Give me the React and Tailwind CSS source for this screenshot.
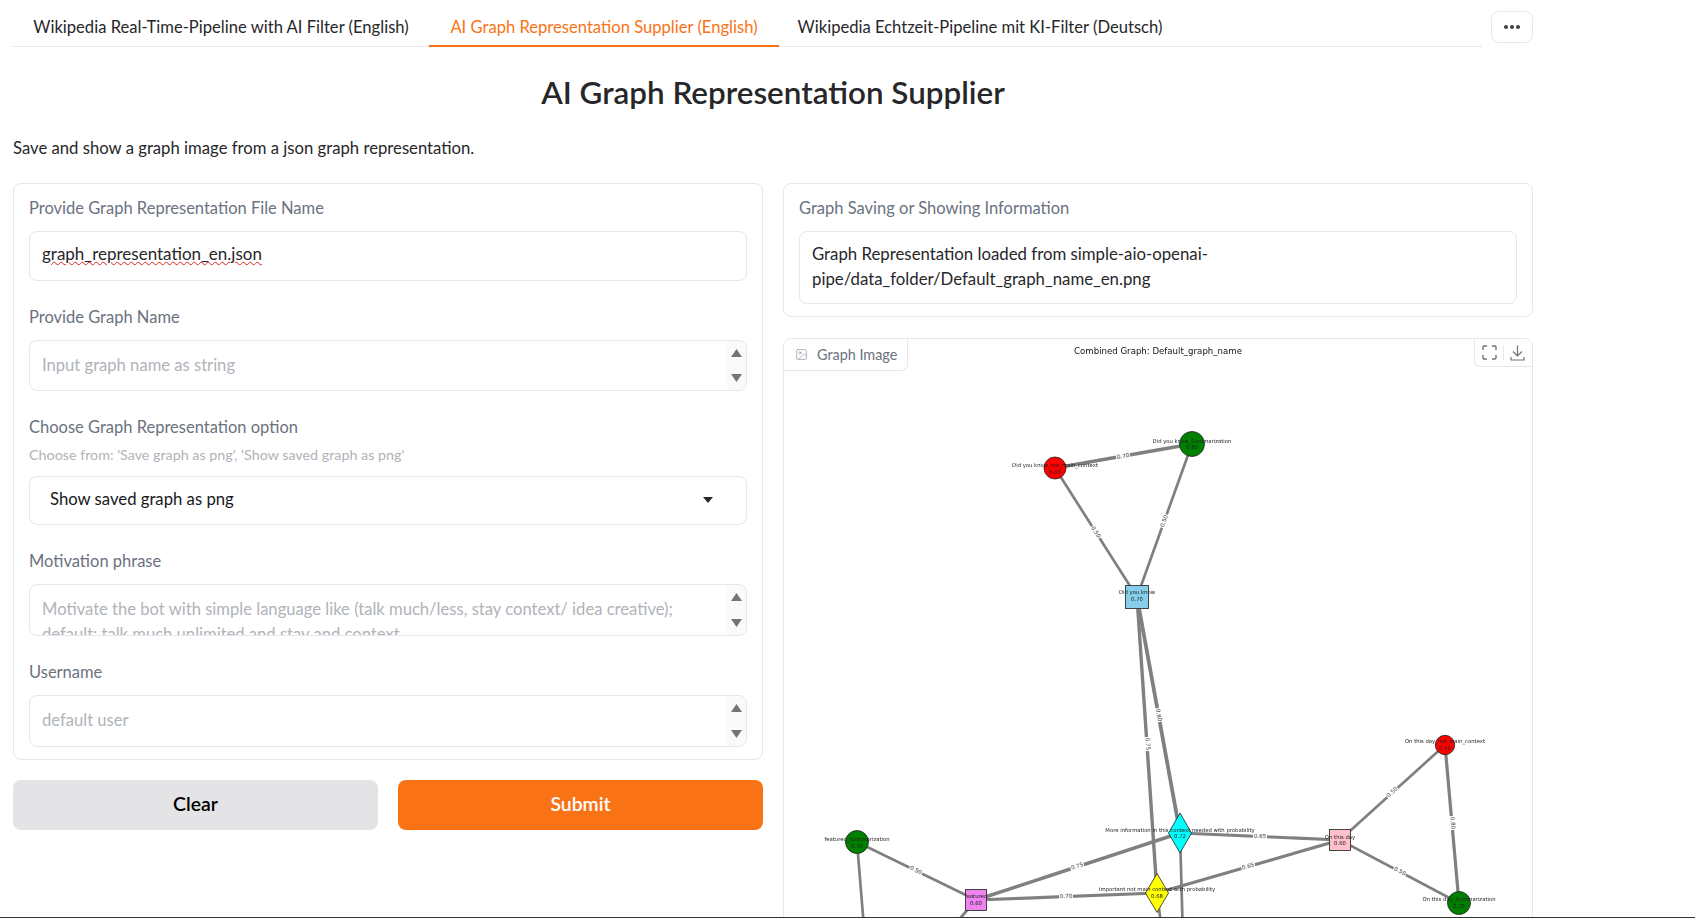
import React from 'react';
import { Image as ImageIcon } from 'lucide-react';

const FONT = { fontFamily: 'Lato, "Noto Sans", sans-serif' };

const edges = [
  { x1: 1055, y1: 468, x2: 1192, y2: 444, w: 3.4 },
  { x1: 1055, y1: 468, x2: 1137, y2: 597, w: 2.7 },
  { x1: 1192, y1: 444, x2: 1137, y2: 597, w: 2.7 },
  { x1: 1137, y1: 597, x2: 1157, y2: 893, w: 3.4 },
  { x1: 1137, y1: 597, x2: 1180, y2: 833, w: 3.8 },
  { x1: 857, y1: 842, x2: 976, y2: 900, w: 2.7 },
  { x1: 857, y1: 842, x2: 865, y2: 940, w: 2.7 },
  { x1: 976, y1: 900, x2: 950, y2: 930, w: 2.7 },
  { x1: 976, y1: 900, x2: 1180, y2: 833, w: 3.5 },
  { x1: 976, y1: 900, x2: 1157, y2: 893, w: 3.2 },
  { x1: 1180, y1: 833, x2: 1340, y2: 840, w: 3.2 },
  { x1: 1157, y1: 893, x2: 1340, y2: 840, w: 3.2 },
  { x1: 1340, y1: 840, x2: 1445, y2: 745, w: 2.7 },
  { x1: 1340, y1: 840, x2: 1459, y2: 903, w: 2.7 },
  { x1: 1445, y1: 745, x2: 1459, y2: 903, w: 3.2 },
  { x1: 1180, y1: 833, x2: 1183, y2: 940, w: 2.7 },
  { x1: 1157, y1: 893, x2: 1163, y2: 940, w: 2.7 },
];

const edgeLabels = [
  { x: 1123, y: 456, a: -10, t: '0.70' },
  { x: 1096, y: 532, a: 57, t: '0.50' },
  { x: 1164, y: 521, a: -70, t: '0.50' },
  { x: 1148, y: 744, a: 86, t: '0.75' },
  { x: 1159, y: 715, a: 80, t: '0.80' },
  { x: 916, y: 870, a: 26, t: '0.50' },
  { x: 1077, y: 866, a: -18, t: '0.75' },
  { x: 1066, y: 896, a: -2, t: '0.70' },
  { x: 1260, y: 836, a: 2, t: '0.65' },
  { x: 1248, y: 866, a: -16, t: '0.65' },
  { x: 1392, y: 792, a: -43, t: '0.50' },
  { x: 1453, y: 823, a: 86, t: '0.80' },
  { x: 1400, y: 871, a: 28, t: '0.50' },
];

const nodes = [
  { kind: 'circle', x: 1055, y: 468, r: 11, fill: '#ff0000', name: 'Did you know_not_main_context', val: '0.60', ly: 465 },
  { kind: 'circle', x: 1192, y: 444, r: 12.5, fill: '#008000', name: 'Did you know_Summarization', val: '0.80', ly: 440.5 },
  { kind: 'square', x: 1137, y: 597, r: 11.5, fill: '#87ceeb', name: 'Did you know', val: '0.70', ly: 592 },
  { kind: 'circle', x: 857, y: 842, r: 11.5, fill: '#008000', name: 'featured_Summarization', val: '0.70', ly: 839 },
  { kind: 'square', x: 976, y: 900, r: 10.5, fill: '#ee82ee', name: 'featured', val: '0.60', ly: 896 },
  { kind: 'diamond', x: 1180, y: 833, r: 11.5, h: 20, fill: '#00ffff', name: 'More information in this context needed with probability', val: '0.72', ly: 829.5 },
  { kind: 'diamond', x: 1157, y: 893, r: 11.5, h: 19.5, fill: '#ffff00', name: 'Important not main context with probability', val: '0.68', ly: 889 },
  { kind: 'square', x: 1340, y: 840, r: 10.5, fill: '#ffc0cb', name: 'On this day', val: '0.60', ly: 836.5 },
  { kind: 'circle', x: 1445, y: 745, r: 9.7, fill: '#ff0000', name: 'On this day_not_main_context', val: '0.50', ly: 741 },
  { kind: 'circle', x: 1459, y: 903, r: 11.5, fill: '#008000', name: 'On this day_Summarization', val: '0.70', ly: 899 },
];

const GraphImage = () => (
  <svg viewBox="784 339 748 599" className="block w-[748px] h-[599px] blur-[0.3px]" style={{ fontFamily: '"DejaVu Sans", sans-serif' }}>
    <text x="1158" y="354" textAnchor="middle" fontSize="8.6" fill="#111">Combined Graph: Default_graph_name</text>
    {edges.map((e, i) => (
      <line key={i} x1={e.x1} y1={e.y1} x2={e.x2} y2={e.y2} stroke="#808080" strokeWidth={e.w} />
    ))}
    {edgeLabels.map((l, i) => (
      <g key={i} transform={`translate(${l.x} ${l.y}) rotate(${l.a})`}>
        <rect x="-7" y="-4" width="14" height="8" fill="#fff" />
        <text y="2" textAnchor="middle" fontSize="5.6" fill="#333">{l.t}</text>
      </g>
    ))}
    {nodes.map((n, i) => (
      <g key={i}>
        {n.kind === 'circle' && <circle cx={n.x} cy={n.y} r={n.r} fill={n.fill} stroke="#222" strokeWidth="0.8" />}
        {n.kind === 'square' && <rect x={n.x - n.r} y={n.y - n.r} width={n.r * 2} height={n.r * 2} fill={n.fill} stroke="#333" strokeWidth="0.9" />}
        {n.kind === 'diamond' && (
          <polygon points={`${n.x},${n.y - n.h} ${n.x + n.r},${n.y} ${n.x},${n.y + n.h} ${n.x - n.r},${n.y}`} fill={n.fill} stroke="#222" strokeWidth="0.8" />
        )}
        <text x={n.x} y={n.ly + 2} textAnchor="middle" fontSize="5.3" fill="#222">{n.name}</text>
        <text x={n.x} y={n.ly + 8.5} textAnchor="middle" fontSize="5.3" fill="#222">{n.val}</text>
      </g>
    ))}
  </svg>
);

// number field arrows on the right side of the textbox
const Spinner = () => (
  <div className="absolute right-0 top-0 bottom-0 w-[19px] bg-[#fafafa] rounded-r-lg flex flex-col items-center justify-between py-[8px]">
    <svg width="11" height="8" viewBox="0 0 11 8"><path d="M5.5 0 L11 8 L0 8 Z" fill="#757575" /></svg>
    <svg width="11" height="8" viewBox="0 0 11 8"><path d="M0 0 L11 0 L5.5 8 Z" fill="#757575" /></svg>
  </div>
);

const Label = ({ children }) => (
  <div className="h-[22px] text-[16.5px] leading-[20px] text-[#6b7280]">{children}</div>
);

const PlaceholderBox = ({ height, lines }) => (
  <div className={`relative mt-[11px] ${height} border border-[#e5e7eb] rounded-lg overflow-hidden px-3 pt-3 text-[16.6px] leading-[25px] text-[#b0b3b9]`}>
    {lines.map((line) => (
      <div key={line} className="whitespace-nowrap">{line}</div>
    ))}
    <Spinner />
  </div>
);

export default function App() {
  return (
    <div className="h-[918px] overflow-hidden border-b border-[#333] bg-white" style={FONT}>
      <div className="w-[1520px] ml-[13px]">
        {/* tabs */}
        <div className="flex items-start">
          <div className="flex w-[1469px] h-[47px] border-b border-[#e5e7eb] text-[16.6px] leading-[24px] text-[#27272a]">
            <div className="w-[416px] pt-[15px] text-center whitespace-nowrap">Wikipedia Real-Time-Pipeline with AI Filter (English)</div>
            <div className="w-[350px] h-[47px] pt-[15px] text-center whitespace-nowrap text-[#f97316] border-b-2 border-[#f97316]">AI Graph Representation Supplier (English)</div>
            <div className="w-[402px] pt-[15px] text-center whitespace-nowrap">Wikipedia Echtzeit-Pipeline mit KI-Filter (Deutsch)</div>
          </div>
          <div className="ml-[9px] mt-[11px] w-[42px] h-[32px] border border-[#e5e7eb] rounded-lg flex items-center justify-center gap-[2px]">
            <span className="w-[4px] h-[4px] rounded-full bg-[#3f3f46]" />
            <span className="w-[4px] h-[4px] rounded-full bg-[#3f3f46]" />
            <span className="w-[4px] h-[4px] rounded-full bg-[#3f3f46]" />
          </div>
        </div>

        <h1 className="mt-[25px] text-center text-[31.4px] leading-[40px] font-semibold text-[#27272a]">AI Graph Representation Supplier</h1>
        <p className="mt-[24px] text-[16.7px] leading-[24px] text-[#27272a]">Save and show a graph image from a json graph representation.</p>

        <div className="mt-[23px] flex gap-5 items-start">
          {/* left column */}
          <div className="w-[750px] shrink-0">
            <div className="border border-[#e5e7eb] rounded-lg px-[15px] pt-[14px] pb-[12px] flex flex-col gap-[26px]">
              <div>
                <Label>Provide Graph Representation File Name</Label>
                <div className="mt-[11px] h-[50px] border border-[#e5e7eb] rounded-lg px-3 pt-[9px] text-[17px] leading-[25px] text-[#27272a]">
                  <span className="underline decoration-wavy decoration-[#e02020] decoration-1">graph_representation_en.json</span>
                </div>
              </div>
              <div>
                <Label>Provide Graph Name</Label>
                <PlaceholderBox height="h-[51px]" lines={['Input graph name as string']} />
              </div>
              <div>
                <Label>Choose Graph Representation option</Label>
                <div className="mt-[7px] h-[20px] text-[14.3px] leading-[18px] text-[#b0b3b9]">Choose from: 'Save graph as png', 'Show saved graph as png'</div>
                <div className="mt-[10px] h-[49px] border border-[#e5e7eb] rounded-lg pl-[20px] pr-[33px] pb-[2px] flex items-center justify-between text-[16.7px] text-[#18181b]">
                  <span>Show saved graph as png</span>
                  <svg width="10" height="6" viewBox="0 0 10 6"><path d="M0 0 L10 0 L5 6 Z" fill="#27272a" /></svg>
                </div>
              </div>
              <div>
                <Label>Motivation phrase</Label>
                <PlaceholderBox
                  height="h-[52px]"
                  lines={[
                    'Motivate the bot with simple language like (talk much/less, stay context/ idea creative);',
                    'default: talk much unlimited and stay and context',
                  ]}
                />
              </div>
              <div>
                <Label>Username</Label>
                <PlaceholderBox height="h-[52px]" lines={['default user']} />
              </div>
            </div>

            <div className="mt-5 flex gap-5">
              <button className="flex-1 h-[50px] pb-[2px] rounded-lg bg-[#e4e4e7] text-[19.4px] font-semibold text-black">Clear</button>
              <button className="flex-1 h-[50px] pb-[2px] rounded-lg bg-[#f97316] text-[19.4px] font-semibold text-white">Submit</button>
            </div>
          </div>

          {/* right column */}
          <div className="w-[750px] shrink-0">
            <div className="h-[134px] border border-[#e5e7eb] rounded-lg px-[15px] pt-[14px]">
              <Label>Graph Saving or Showing Information</Label>
              <div className="mt-[11px] h-[73px] border border-[#e5e7eb] rounded-lg px-3 pt-[9px] text-[16.8px] leading-[25px] text-[#27272a]">
                Graph Representation loaded from simple-aio-openai-<br />pipe/data_folder/Default_graph_name_en.png
              </div>
            </div>

            <div className="relative mt-[21px] h-[601px] border border-[#e5e7eb] rounded-t-lg overflow-hidden">
              <GraphImage />
              <div className="absolute left-0 top-0 h-[32px] w-[124px] border-r border-b border-[#e5e7eb] rounded-br-md bg-white flex items-center pl-[11px] gap-[9px] text-[14.4px] text-[#6b7280]">
                <ImageIcon size={13} strokeWidth={1.5} className="text-[#9ca3af]" />
                <span>Graph Image</span>
              </div>
              <div className="absolute right-0 top-0 h-[28px] w-[58px] border-l border-b border-[#e5e7eb] rounded-bl-md bg-white flex items-center justify-center gap-[6px]">
                <svg width="15" height="15" viewBox="0 0 15 15" fill="none" stroke="#71717a" strokeWidth="1.4">
                  <path d="M1 5 V2.2 Q1 1 2.2 1 H5 M10 1 H12.8 Q14 1 14 2.2 V5 M14 10 V12.8 Q14 14 12.8 14 H10 M5 14 H2.2 Q1 14 1 12.8 V10" />
                </svg>
                <span className="w-px h-[14px] bg-[#e5e7eb]" />
                <svg width="15" height="16" viewBox="0 0 15 16" fill="none" stroke="#71717a" strokeWidth="1.2">
                  <path d="M7.5 0.5 V11 M3 6.5 L7.5 11 L12 6.5 M1 12 V15 H14 V12" />
                </svg>
              </div>
            </div>
          </div>
        </div>
      </div>
    </div>
  );
}
